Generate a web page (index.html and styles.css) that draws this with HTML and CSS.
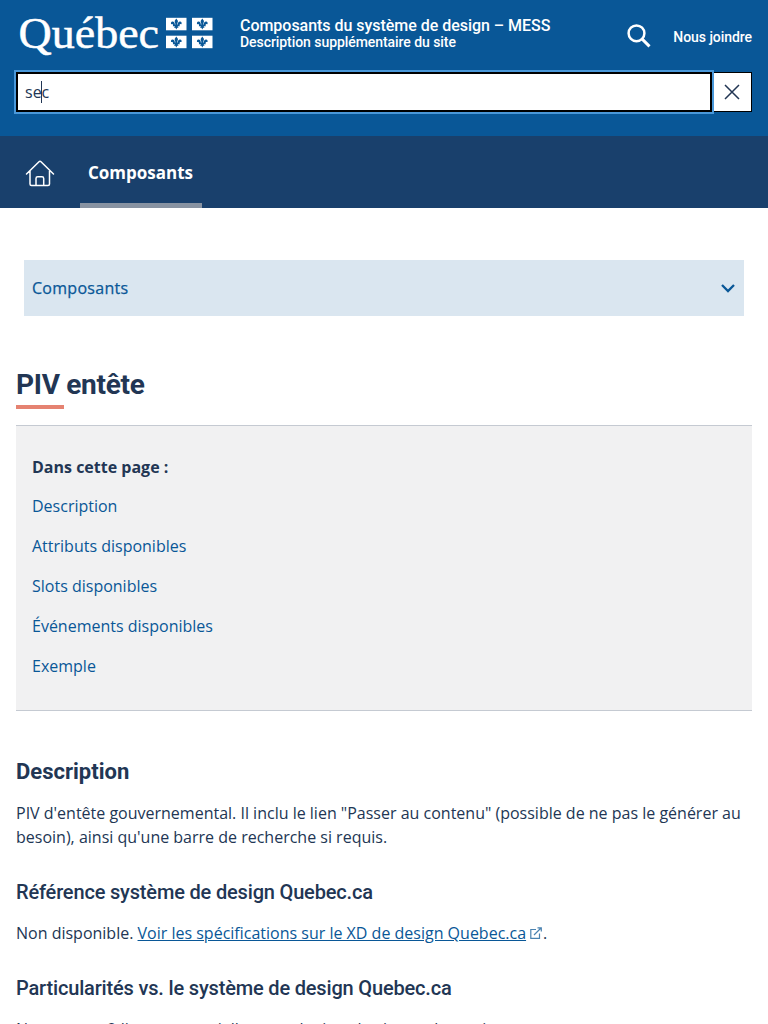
FILE: index.html
```html
<!DOCTYPE html>
<html lang="fr">
<head>
<meta charset="utf-8">
<title>PIV entête</title>
<link rel="stylesheet" href="styles.css">
</head>
<body>
<header class="piv">
  <div class="piv-top">
    <svg class="logo" width="200" height="44" viewBox="16 12 200 44" role="img" aria-label="Québec">
      <defs>
        <g id="flag">
          <rect width="20.5" height="12.5" fill="#fff"/>
          <path fill="#095797" d="M10.300 .8L8.600 3.200L9.500 6.800H8.800C8.800 4.600 7.800 3.600 6.500 3.700C5.100 3.800 4.500 5.200 5.200 6.400L6.500 6.200L7.100 7.200L6.800 8.500H9L8 10L9.400 10L10.300 11.800L11.200 10L12.600 10L11.600 8.500H13.800L13.500 7.200L14.100 6.200L15.400 6.400C16.100 5.200 15.500 3.800 14.100 3.700C12.800 3.600 11.800 4.600 11.800 6.800H11.100L12 3.200Z"/>
        </g>
      </defs>
      <text class="wordmark" x="18.500" y="48" textLength="140.500" lengthAdjust="spacingAndGlyphs">Québec</text>
      <use href="#flag" x="166" y="17.800"/><use href="#flag" x="192" y="17.800"/>
      <use href="#flag" x="166" y="35.700"/><use href="#flag" x="192" y="35.700"/>
    </svg>
    <div class="site">
      <div class="site-name">Composants du système de design – MESS</div>
      <div class="site-desc">Description supplémentaire du site</div>
    </div>
    <svg class="search-icon" width="24" height="24" viewBox="0 0 24 24" fill="none" stroke="#fff"><circle cx="9.500" cy="9.300" r="7.900" stroke-width="2.500"/><path d="M15.200 15.200L22.500 22.300" stroke-width="3"/></svg>
    <a class="contact">Nous joindre</a>
  </div>
  <div class="search">
    <div class="field"><span>se</span><i class="caret"></i><span>c</span></div>
    <button class="clear" aria-label="Effacer"><svg width="16" height="16" viewBox="0 0 16 16"><path d="M1 1L15 15M15 1L1 15" stroke="#223654" stroke-width="1.500"/></svg></button>
  </div>
</header>
<nav class="menu">
  <svg class="home" width="32" height="30" viewBox="0 0 32 30" fill="none" stroke="#fff" stroke-width="1.500" stroke-linecap="round" stroke-linejoin="round"><path d="M2.500 16L15 3.700Q16 2.700 17 3.700L29.500 16M6 13V26Q6 27.500 7.500 27.500H24Q25.500 27.500 25.500 26V13M12 27.500V20.500Q12 18.800 13.700 18.800H18Q19.700 18.800 19.700 20.500V27.500"/></svg>
  <a class="tab">Composants</a>
</nav>
<main>
  <div class="section-menu"><span>Composants</span><svg width="16" height="10" viewBox="0 0 16 10"><path d="M2 2L8 8L14 2" fill="none" stroke="#095797" stroke-width="2.300"/></svg></div>
  <h1>PIV entête</h1>
  <section class="toc">
    <strong>Dans cette page :</strong>
    <a>Description</a><a>Attributs disponibles</a><a>Slots disponibles</a><a>Événements disponibles</a><a>Exemple</a>
  </section>
  <h2>Description</h2>
  <p>PIV d'entête gouvernemental. Il inclu le lien "Passer au contenu" (possible de ne pas le générer au besoin), ainsi qu'une barre de recherche si requis.</p>
  <h3>Référence système de design Quebec.ca</h3>
  <p>Non disponible. <a class="link">Voir les spécifications sur le XD de design Quebec.ca</a><svg class="ext" width="12" height="12" viewBox="0 0 12 12" fill="none" stroke="#4a82b0"><path d="M6 2.500H.8V11.300H9.500V6.500M4 8L11 1M7.500.8H11.300V4.500" stroke-width="1.200"/></svg>.</p>
  <h3>Particularités vs. le système de design Quebec.ca</h3>
  <p>Nous avons 2 lignes potentielles pour le titre du site sur la version</p>
</main>
</body>
</html>
```
FILE: styles.css
```css
* { box-sizing: border-box; }
html, body { height: 1024px; overflow: hidden; }
body { margin: 0; background: #fff; color: #223654; font: 16px/24px "Open Sans", sans-serif; }
.piv { height: 136px; padding: 0 16px; background: #095797; color: #fff; }
.piv-top { display: flex; height: 72px; padding-top: 12px; align-items: flex-start; }
.logo { flex: none; }
.wordmark { font: 44px "Liberation Serif", serif; fill: #fff; stroke: #fff; stroke-width: .5px; }
.site { margin: 5px 0 0 24px; font-family: Roboto, sans-serif; white-space: nowrap; }
.site-name { font-size: 16px; font-weight: 500; line-height: 17px; letter-spacing: -.03px; }
.site-desc { font-size: 14px; font-weight: 500; line-height: 16px; letter-spacing: -.06px; }
.search-icon { margin: 12px 0 0 auto; }
.contact { margin: 17px 0 0 22px; font: 500 14px/16px Roboto, sans-serif; letter-spacing: -.06px; }
.search { display: flex; height: 40px; }
.field { display: flex; align-items: center; width: 696px; padding-left: 7px; background: #fff; border: 2px solid #000; outline: 2px solid #4a98d9; color: #223654; font-weight: 400; }
.caret { width: 1px; height: 22px; margin: 0 0 0 -1px; background: #223654; }
.clear { display: flex; align-items: center; justify-content: center; flex: 1; margin-left: 2px; padding: 0 1px 0 0; background: #fff; border: 1px solid #000; border-left: 0; }
.menu { display: flex; height: 72px; background: #19406c; color: #fff; }
.home { margin: 22px 24px 0; }
.tab { width: 122px; padding: 25px 8px 0; border-bottom: 5px solid #8893a2; font-size: 17px; font-weight: 700; }
main { padding: 52px 16px 0; }
.section-menu { display: flex; align-items: center; justify-content: space-between; height: 56px; margin: 0 8px; padding: 0 8px; background: #dae6f0; color: #095797; font-weight: 400; letter-spacing: .28px; -webkit-text-stroke: .25px #095797; }
h1, h2, h3 { margin: 0; font-family: Roboto, sans-serif; }
h1 { margin-top: 53px; font-size: 28px; line-height: 32px; font-weight: 700; letter-spacing: -.3px; }
h1::after { content: ""; display: block; width: 48px; height: 4px; margin-top: 4px; background: #e58271; }
.toc { display: flex; flex-direction: column; height: 286px; margin-top: 16px; padding: 29px 16px 0; background: #f1f1f2; border: solid #c5cad2; border-width: 1px 0; }
.toc strong { margin-bottom: 15px; font-weight: 700; }
.toc a { margin-bottom: 16px; color: #095797; }
h2 { margin-top: 47px; font-size: 22px; line-height: 28px; }
h3 { margin-top: 31px; font-size: 20px; line-height: 24px; font-weight: 500; letter-spacing: -.17px; }
p { margin: 16px 0 0; }
h2 + p { margin-top: 15px; }
h3 + p { margin-top: 17px; }
.link { color: #095797; text-decoration: underline; }
.ext { margin: 0 1px 0 4px; }
```
